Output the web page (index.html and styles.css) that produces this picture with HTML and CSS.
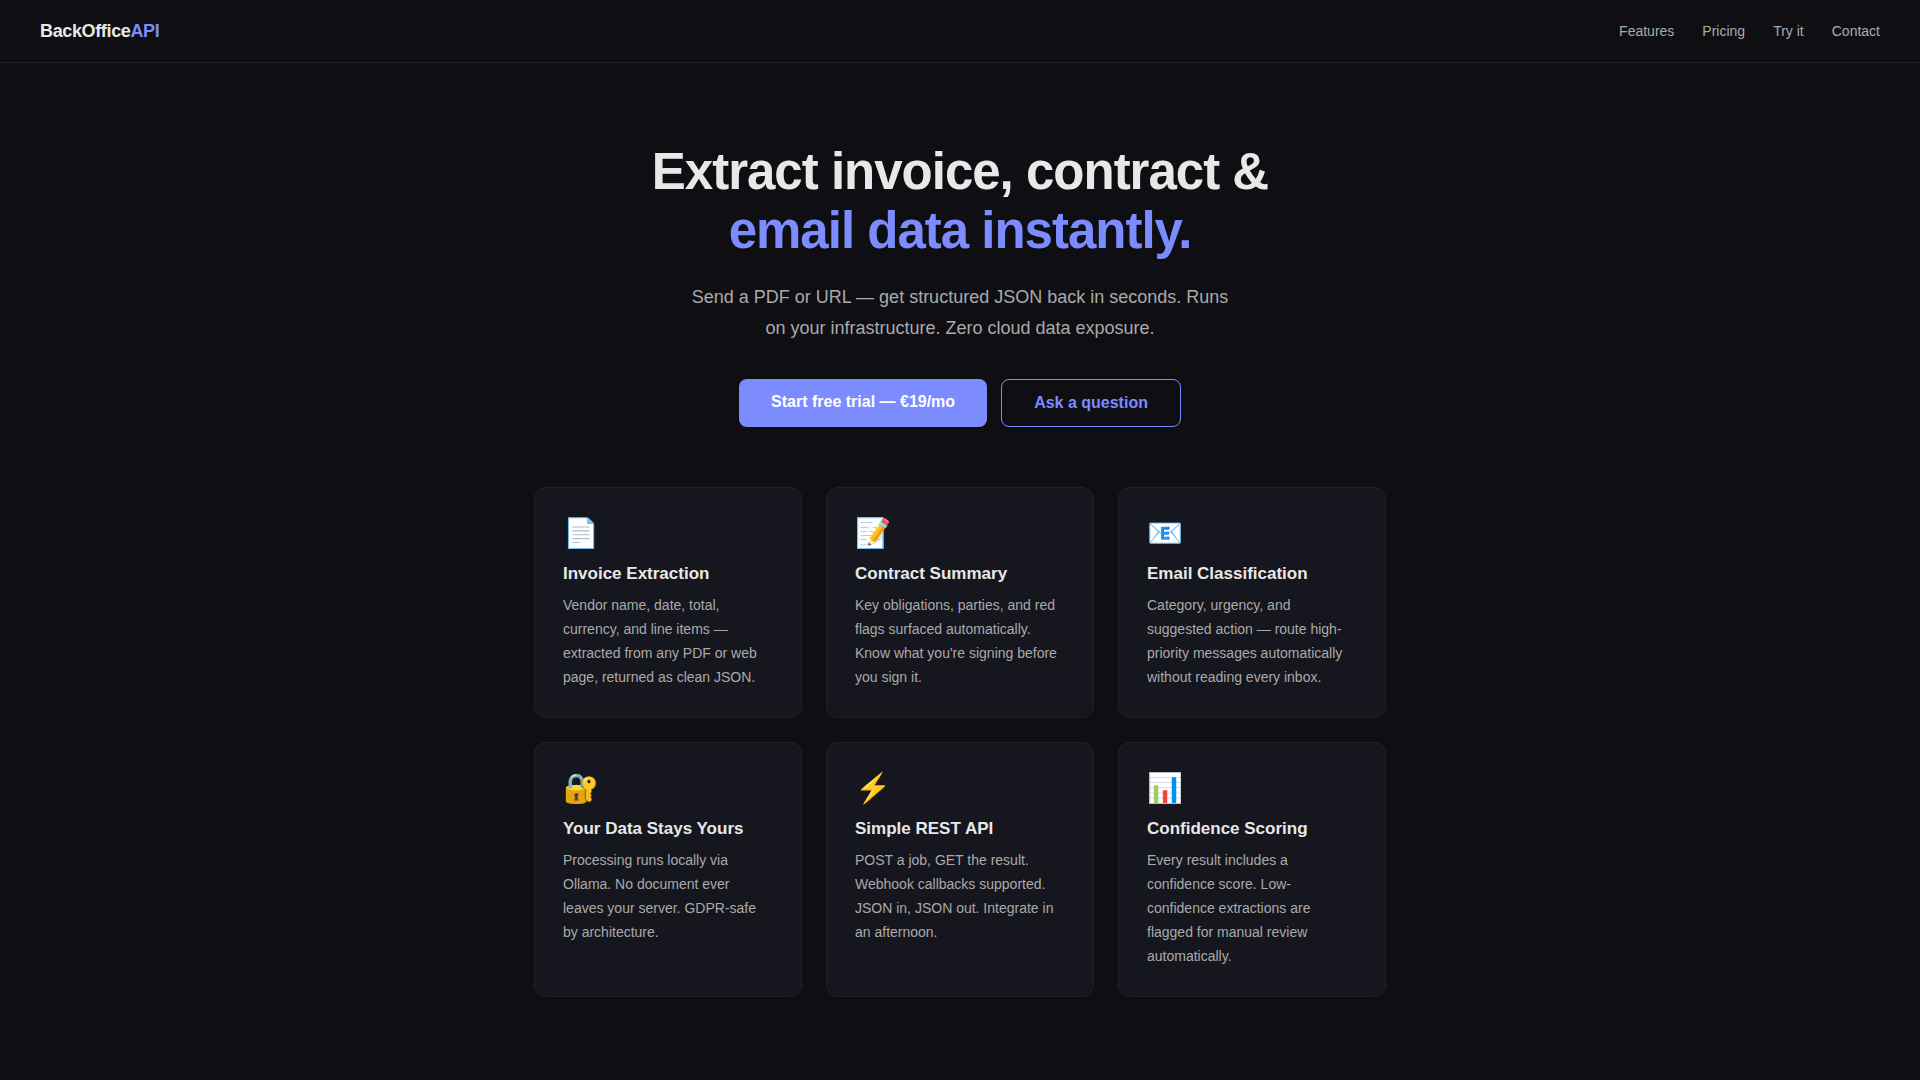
FILE: index.html
```html
<!DOCTYPE html>
<html lang="en">
<head>
<meta charset="UTF-8">
<meta name="viewport" content="width=device-width, initial-scale=1.0">
<title>BackOfficeAPI</title>
<link rel="stylesheet" href="styles.css">
</head>
<body>

<nav>
  <div class="logo">BackOffice<span>API</span></div>
  <div class="links">
    <a href="#features">Features</a>
    <a href="#pricing">Pricing</a>
    <a href="#try">Try it</a>
    <a href="#contact">Contact</a>
  </div>
</nav>

<section class="hero">
  <h1>Extract invoice, contract &amp;<br><span>email data instantly.</span></h1>
  <p>Send a PDF or URL — get structured JSON back in seconds. Runs on your infrastructure. Zero cloud data exposure.</p>
  <div class="actions">
    <a href="#pricing" class="btn">Start free trial — €19/mo</a>
    <a href="#contact" class="btn btn-outline">Ask a question</a>
  </div>
</section>

<section class="features" id="features">
  <div class="card">
    <div class="icon">📄</div>
    <h3>Invoice Extraction</h3>
    <p>Vendor name, date, total, currency, and line items — extracted from any PDF or web page, returned as clean JSON.</p>
  </div>
  <div class="card">
    <div class="icon">📝</div>
    <h3>Contract Summary</h3>
    <p>Key obligations, parties, and red flags surfaced automatically. Know what you're signing before you sign it.</p>
  </div>
  <div class="card">
    <div class="icon">📧</div>
    <h3>Email Classification</h3>
    <p>Category, urgency, and suggested action — route high-priority messages automatically without reading every inbox.</p>
  </div>
  <div class="card">
    <div class="icon">🔐</div>
    <h3>Your Data Stays Yours</h3>
    <p>Processing runs locally via Ollama. No document ever leaves your server. GDPR-safe by architecture.</p>
  </div>
  <div class="card">
    <div class="icon">⚡</div>
    <h3>Simple REST API</h3>
    <p>POST a job, GET the result. Webhook callbacks supported. JSON in, JSON out. Integrate in an afternoon.</p>
  </div>
  <div class="card">
    <div class="icon">📊</div>
    <h3>Confidence Scoring</h3>
    <p>Every result includes a confidence score. Low-confidence extractions are flagged for manual review automatically.</p>
  </div>
</section>

</body>
</html>
```

FILE: styles.css
```css
:root { --bg: #0f0f13; --card: #16161e; --border: #222; --text: #e8e8e8; --muted: #aaa; --accent: #7c8cff; }

* { box-sizing: border-box; margin: 0; padding: 0; }

body { background: var(--bg); color: var(--text); font-family: "Liberation Sans", Arial, sans-serif; line-height: 1.6; }

nav { display: flex; justify-content: space-between; align-items: center; padding: 16px 40px; border-bottom: 1px solid var(--border); }
.logo { font-size: 18px; line-height: 30px; font-weight: 700; letter-spacing: -0.02em; }
.logo span { color: var(--accent); }
.links { display: flex; gap: 28px; }
.links a { color: var(--muted); font-size: 14px; text-decoration: none; }

.hero { max-width: 800px; margin: 0 auto; padding: 79px 24px 60px; text-align: center; }
.hero h1 { font-size: 51px; line-height: 59px; letter-spacing: -1px; margin-bottom: 22px; }
.hero h1 span { color: var(--accent); }
.hero p { max-width: 560px; margin: 0 auto 35px; color: var(--muted); font-size: 18px; line-height: 31px; }
.actions { display: flex; justify-content: center; gap: 14px; }

.btn { padding: 11px 32px; background: var(--accent); border-radius: 8px; color: #fff; font-size: 16px; line-height: 24px; font-weight: 600; text-decoration: none; }
.btn-outline { background: transparent; border: 1px solid var(--accent); color: var(--accent); }

.features { display: grid; grid-template-columns: repeat(auto-fit, minmax(240px, 1fr)); gap: 24px; max-width: 900px; margin: 0 auto; padding: 0 24px 80px; }
.card { background: var(--card); border: 1px solid var(--border); border-radius: 12px; padding: 28px; }
.icon { font-size: 29px; line-height: 35px; margin-bottom: 10px; }
.card h3 { font-size: 17px; line-height: 26px; margin-bottom: 6px; }
.card p { color: var(--muted); font-size: 14px; line-height: 24px; }
```
